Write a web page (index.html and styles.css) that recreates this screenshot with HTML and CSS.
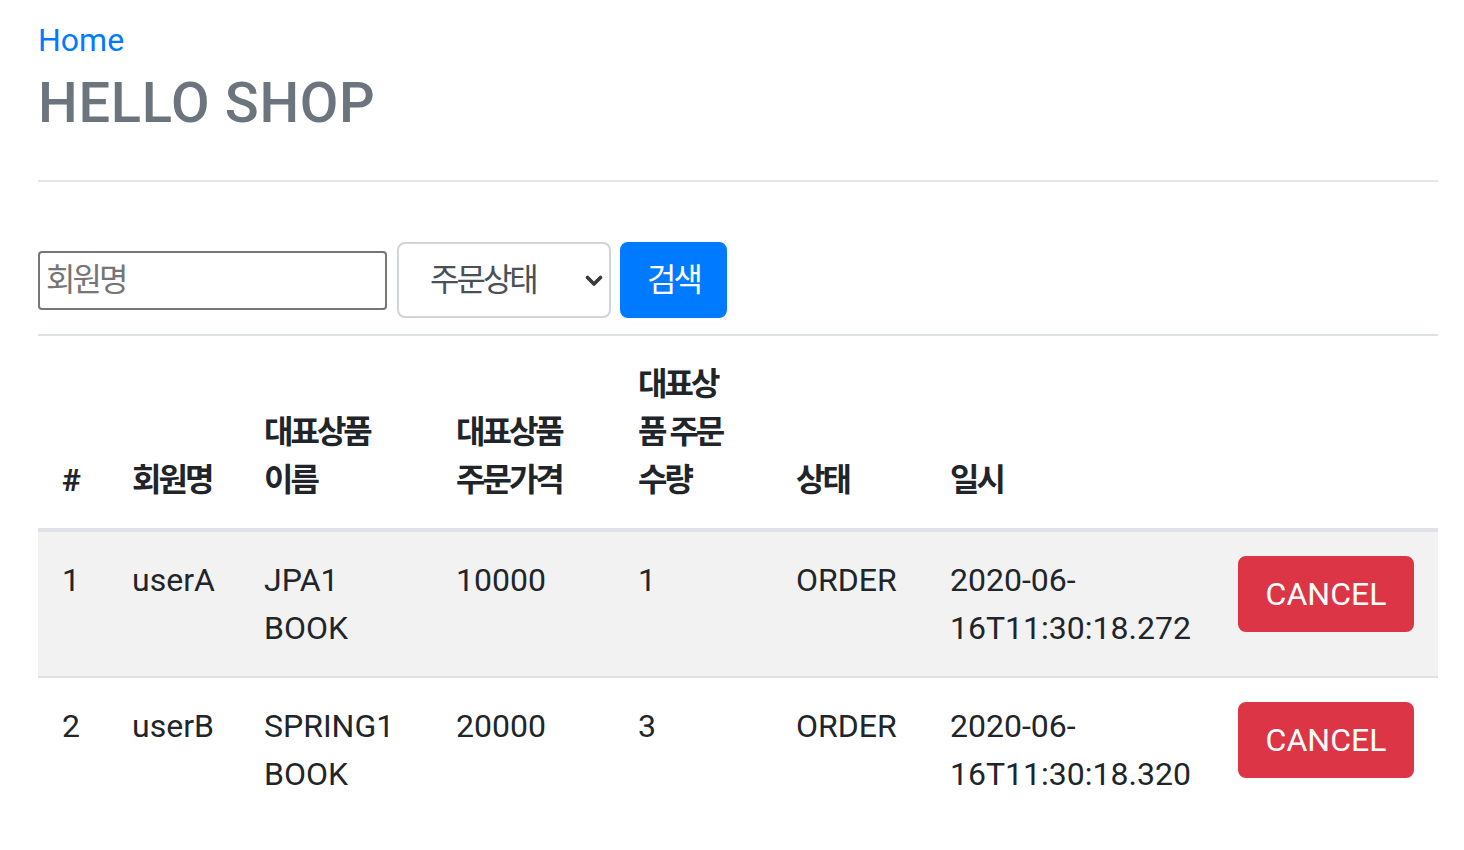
FILE: index.html
```html
<!DOCTYPE html>
<html lang="ko">
<head>
<meta charset="utf-8">
<title>HELLO SHOP</title>
<link rel="stylesheet" href="styles.css">
</head>
<body>
<div class="container">
  <div class="header">
    <a class="home" href="#">Home</a>
    <h3 class="title">HELLO SHOP</h3>
  </div>
  <form class="search">
    <input class="name-input" type="text" placeholder="회원명">
    <div class="select-wrap">
      <select class="status-select">
        <option>주문상태</option>
        <option>ORDER</option>
        <option>CANCEL</option>
      </select>
      <svg class="chevron" width="18" height="12" viewBox="0 0 18 12"><path d="M2.5 2.5 L9 9 L15.5 2.5" fill="none" stroke="#3a3a3a" stroke-width="3.6" stroke-linecap="round" stroke-linejoin="round"/></svg>
    </div>
    <button class="btn btn-primary" type="button">검색</button>
  </form>
  <table class="orders">
    <thead>
      <tr>
        <th class="c-no">#</th>
        <th class="c-member">회원명</th>
        <th class="c-item">대표상품<br>이름</th>
        <th class="c-price">대표상품<br>주문가격</th>
        <th class="c-qty">대표상<br>품 주문<br>수량</th>
        <th class="c-status">상태</th>
        <th class="c-date">일시</th>
        <th class="c-action"></th>
      </tr>
    </thead>
    <tbody>
      <tr>
        <td>1</td>
        <td>userA</td>
        <td>JPA1 BOOK</td>
        <td>10000</td>
        <td>1</td>
        <td>ORDER</td>
        <td>2020-06-16T11:30:18.272</td>
        <td><button class="btn btn-danger" type="button">CANCEL</button></td>
      </tr>
      <tr>
        <td>2</td>
        <td>userB</td>
        <td>SPRING1 BOOK</td>
        <td>20000</td>
        <td>3</td>
        <td>ORDER</td>
        <td>2020-06-16T11:30:18.320</td>
        <td><button class="btn btn-danger" type="button">CANCEL</button></td>
      </tr>
    </tbody>
  </table>
</div>
</body>
</html>
```
FILE: styles.css
```css
* { box-sizing: border-box; }

body {
  margin: 0;
  font-family: Roboto, "Noto Sans CJK KR", sans-serif;
  font-size: 32px;
  line-height: 48px;
  color: #212529;
  background: #fff;
}

.container {
  padding: 0 26px 0 38px;
}

.header {
  padding-top: 16px;
  padding-bottom: 43px;
  border-bottom: 2px solid #e5e5e5;
}

.home {
  display: block;
  color: #007bff;
  text-decoration: none;
  line-height: 48px;
  width: max-content;
}

.title {
  margin: 6px 0 0 0;
  font-size: 56px;
  line-height: 67px;
  font-weight: 500;
  letter-spacing: 0.7px;
  color: #6c757d;
}

.search {
  display: flex;
  align-items: center;
  margin-top: 60px;
  margin-bottom: 16px;
  height: 76px;
}

.name-input {
  width: 349px;
  height: 59px;
  border: 2px solid #767676;
  border-radius: 4px;
  padding: 0 6px;
  font-family: Roboto, "Noto Sans CJK KR", sans-serif;
  font-size: 32px;
  letter-spacing: -3px;
  color: #212529;
  outline: none;
}

.name-input::placeholder { color: #757575; }

.select-wrap {
  position: relative;
  margin-left: 10px;
  width: 214px;
  height: 76px;
}

.status-select {
  appearance: none;
  -webkit-appearance: none;
  width: 100%;
  height: 100%;
  border: 2px solid #ced4da;
  border-radius: 8px;
  background: #fff;
  padding: 0 0 0 31px;
  font-family: Roboto, "Noto Sans CJK KR", sans-serif;
  font-size: 32px;
  letter-spacing: -3px;
  color: #495057;
}

.chevron {
  position: absolute;
  right: 8px;
  top: 33px;
  pointer-events: none;
}

.btn {
  display: inline-block;
  font-family: Roboto, "Noto Sans CJK KR", sans-serif;
  font-size: 32px;
  line-height: 48px;
  padding: 12px 24px;
  border: 2px solid transparent;
  border-radius: 8px;
  color: #fff;
  cursor: pointer;
}

.btn-primary {
  margin-left: 9px;
  background: #007bff;
  border-color: #007bff;
  letter-spacing: -3px;
  width: 107px;
  height: 76px;
  padding: 12px 0;
  text-align: center;
}

.btn-danger {
  background: #dc3545;
  border-color: #dc3545;
  width: 176px;
  padding: 12px 0;
  text-align: center;
}

.orders {
  width: 100%;
  border-collapse: collapse;
  table-layout: fixed;
}

.orders th,
.orders td {
  padding: 24px;
  text-align: left;
  border-top: 2px solid #dee2e6;
}

.orders th {
  vertical-align: bottom;
  font-weight: 700;
  border-bottom: 4px solid #dee2e6;
  letter-spacing: -3px;
  white-space: nowrap;
}

.orders td {
  vertical-align: top;
}

.orders tbody tr:nth-of-type(odd) {
  background: #f2f2f2;
}

.c-no { width: 70px; }
.c-member { width: 132px; }
.c-item { width: 192px; }
.c-price { width: 182px; }
.c-qty { width: 158px; }
.c-status { width: 154px; }
.c-date { width: 288px; }
.c-action { width: 224px; }
```
